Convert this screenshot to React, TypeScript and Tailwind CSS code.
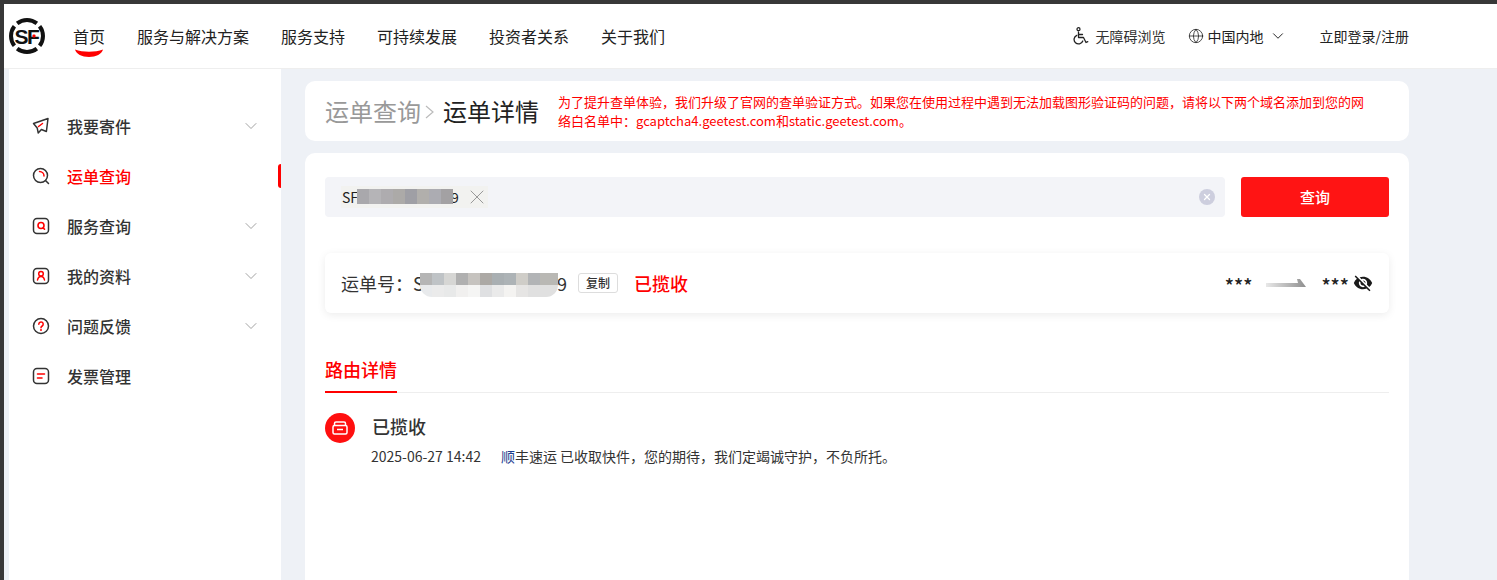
import React from 'react'
import { ChevronDown, Globe, X } from 'lucide-react'
import { MdVisibilityOff } from 'react-icons/md'

const font = { fontFamily: '"Noto Sans CJK SC", "Noto Sans", sans-serif' }

const navItems = ['首页', '服务与解决方案', '服务支持', '可持续发展', '投资者关系', '关于我们']

const SfLogo = () => (
  <svg width="36" height="36" viewBox="0 0 36 36" className="shrink-0">
    <g fill="none" stroke="#111" strokeWidth="4">
      <path d="M8.150 5.400A16 16 0 0 1 27.850 5.400" />
      <path d="M30.600 8.150A16 16 0 0 1 30.600 27.850" />
      <path d="M27.850 30.600A16 16 0 0 1 8.150 30.600" />
      <path d="M5.400 27.850A16 16 0 0 1 5.400 8.150" />
    </g>
    <text x="17.500" y="25.500" textAnchor="middle" fontSize="21" fontWeight="700" fill="#111" letterSpacing="-1.500" fontFamily="Liberation Sans, sans-serif">
      SF
    </text>
    <rect x="23.500" y="16.500" width="3" height="3" rx="1" fill="#ff0000" />
  </svg>
)

const SendIcon = () => (
  <svg width="18" height="18" viewBox="0 0 18 18" fill="none">
    <path d="M1.500 6.500 16 1.500l-1.600 13-5-2-3.200 3.400-1-5z" stroke="#333" strokeWidth="1.500" strokeLinejoin="round" />
    <path d="M6.500 9.500 10.500 6.500" stroke="#ff0000" strokeWidth="1.500" strokeLinecap="round" />
  </svg>
)

const TrackIcon = () => (
  <svg width="18" height="18" viewBox="0 0 18 18" fill="none">
    <circle cx="8.500" cy="8.500" r="7" stroke="#333" strokeWidth="1.500" />
    <path d="M13.500 13.500 16.500 16.500" stroke="#333" strokeWidth="1.500" strokeLinecap="round" />
    <path d="M7.500 4.500a4.500 4.500 0 0 1 4.500 4.500" stroke="#ff0000" strokeWidth="1.500" strokeLinecap="round" />
  </svg>
)

const ServiceIcon = () => (
  <svg width="18" height="18" viewBox="0 0 18 18" fill="none">
    <rect x="1.500" y="1.500" width="15" height="15" rx="3.500" stroke="#333" strokeWidth="1.500" />
    <circle cx="9" cy="8.500" r="3" stroke="#ff0000" strokeWidth="1.600" />
    <path d="M11 11l1.500 1.200" stroke="#ff0000" strokeWidth="1.600" strokeLinecap="round" />
  </svg>
)

const ProfileIcon = () => (
  <svg width="18" height="18" viewBox="0 0 18 18" fill="none">
    <rect x="1.500" y="1.500" width="15" height="15" rx="3.500" stroke="#333" strokeWidth="1.500" />
    <circle cx="9" cy="6.800" r="2.300" stroke="#ff0000" strokeWidth="1.500" />
    <path d="M5.500 13c.4-2.400 1.600-3.600 3.500-3.600s3.100 1.200 3.500 3.600" stroke="#ff0000" strokeWidth="1.500" strokeLinecap="round" />
  </svg>
)

const HelpIcon = () => (
  <svg width="18" height="18" viewBox="0 0 18 18" fill="none">
    <circle cx="9" cy="9" r="7.500" stroke="#333" strokeWidth="1.500" />
    <path d="M6.800 7.200a2.200 2.200 0 1 1 3.400 1.800c-.8.500-1.200 1-1.200 1.800" stroke="#ff0000" strokeWidth="1.500" strokeLinecap="round" />
    <circle cx="9" cy="13" r="1" fill="#ff0000" />
  </svg>
)

const InvoiceIcon = () => (
  <svg width="18" height="18" viewBox="0 0 18 18" fill="none">
    <rect x="1.500" y="1.500" width="15" height="15" rx="3.500" stroke="#333" strokeWidth="1.500" />
    <path d="M5.500 7h7M5.500 11h4.500" stroke="#ff0000" strokeWidth="1.600" strokeLinecap="round" />
  </svg>
)

const WheelchairIcon = () => (
  <svg width="17" height="18" viewBox="0 0 17 18" fill="none" stroke="#222222" strokeWidth="1.300" strokeLinecap="round" strokeLinejoin="round">
    <circle cx="6.500" cy="2.200" r="1.500" />
    <path d="M6.500 5v5.500h5l2.500 5 1.800-.8" />
    <path d="M6.500 7.500h4" />
    <path d="M4.800 8.300a4.500 4.500 0 1 0 6 5.700" />
  </svg>
)

const menu = [
  { label: '我要寄件', icon: <SendIcon />, arrow: true },
  { label: '运单查询', icon: <TrackIcon />, active: true },
  { label: '服务查询', icon: <ServiceIcon />, arrow: true },
  { label: '我的资料', icon: <ProfileIcon />, arrow: true },
  { label: '问题反馈', icon: <HelpIcon />, arrow: true },
  { label: '发票管理', icon: <InvoiceIcon /> },
]

const inputMosaic = ['#a9a8ac', '#b5b4b7', '#aeacaf', '#acaaa8', '#9f9fa5', '#b1afac', '#acacb2', '#a3a1a3']
const mosaicTop = ['#b5b5b5', '#bfc3c6', '#d6d6d4', '#b0b0b0', '#c6c3bf', '#aca9a5', '#a9afb2', '#adb3b6', '#cfcdc8', '#b2b4b6', '#b9b8b4', '#b9b8b4']
const mosaicBottom = ['#e8eaec', '#ebebeb', '#e8e9e9', '#f1f0ef', '#f5f5f4', '#dfe0e2', '#eaeaea', '#f4f3f1', '#e6e5e4', '#e0e0e0', '#e0e0e0', '#e0e0e0']

const Sidebar = () => (
  <aside className="w-[272px] h-full bg-white pt-[32px] shrink-0">
    {menu.map((item) => (
      <div key={item.label} className="relative flex items-center h-[50px] pl-[23px] pr-[20px]">
        <span className="w-[35px] flex">{item.icon}</span>
        <span className={`text-[16px] font-medium ${item.active ? 'text-[#ff0000]' : 'text-[#333333]'}`}>{item.label}</span>
        {item.arrow && <ChevronDown size={20} strokeWidth={1.100} className="ml-auto text-[#999999]" />}
        {item.active && <span className="absolute right-0 top-[13px] w-[3px] h-[24px] rounded-l-sm bg-[#ff0000]" />}
      </div>
    ))}
  </aside>
)

const ArrowBar = () => (
  <svg width="40" height="9" viewBox="0 0 40 9">
    <defs>
      <linearGradient id="routeArrow" x1="0" x2="1" y1="0" y2="0">
        <stop offset="0" stopColor="#e8e8e8" />
        <stop offset="1" stopColor="#8f8f8f" />
      </linearGradient>
    </defs>
    <path d="M0 4h32L31 0h3l6 8H0z" fill="url(#routeArrow)" />
  </svg>
)

export default function App() {
  return (
    <div className="w-[1497px] h-[580px] overflow-hidden flex flex-col bg-[#eef1f6] text-[#333333]" style={font}>
      <div className="h-[4px] bg-[#383838] shrink-0" />
      <div className="flex flex-1 min-h-0">
        <div className="w-[4px] bg-[#383838] shrink-0" />
        <div className="flex-1 min-w-0 flex flex-col">
          <header className="h-[65px] shrink-0 bg-white border-b border-[#eeeeee] flex items-center pl-[5px] pr-[88px]">
            <SfLogo />
            <nav className="flex gap-[32px] ml-[28px] text-[16px] text-[#222222]">
              {navItems.map((item, i) => (
                <span key={item} className="relative">
                  {item}
                  {i === 0 && (
                    <svg width="30" height="9" viewBox="0 0 30 9" className="absolute left-[1px] top-[25px]">
                      <path d="M1 .5c8 3 20 3 28 0-1 4.500-7 7.500-14 7.500S2 5 1 .5z" fill="#ff0000" />
                    </svg>
                  )}
                </span>
              ))}
            </nav>
            <div className="ml-auto flex items-center text-[14px] text-[#222222]">
              <WheelchairIcon />
              <span className="ml-[7px] text-[#333333]">无障碍浏览</span>
              <Globe size={16} strokeWidth={1.200} className="ml-[22px]" />
              <span className="ml-[4px]">中国内地</span>
              <ChevronDown size={18} strokeWidth={1.300} className="ml-[5px]" />
              <span className="ml-[33px]">立即登录/注册</span>
            </div>
          </header>
          <div className="flex-1 min-h-0 flex pl-[5px]">
            <Sidebar />
            <main className="w-[1104px] ml-[24px] pt-[12px] flex flex-col gap-[12px]">
              <section className="h-[60px] bg-white rounded-[10px] flex items-center px-[20px] shrink-0">
                <span className="text-[24px] text-[#999999] leading-none">运单查询</span>
                <svg width="9" height="14" viewBox="0 0 9 14" fill="none" stroke="#bbbbbb" strokeWidth="1.200" className="ml-[4px] mt-[1px]">
                  <path d="M1 1l7 6-7 6" />
                </svg>
                <span className="text-[24px] text-[#222222] leading-none ml-[9px]">运单详情</span>
                <p className="ml-[19px] w-[810px] text-[13px] leading-[19px] text-[#ff0000]">
                  为了提升查单体验，我们升级了官网的查单验证方式。如果您在使用过程中遇到无法加载图形验证码的问题，请将以下两个域名添加到您的网络白名单中：gcaptcha4.geetest.com和static.geetest.com。
                </p>
              </section>
              <section className="flex-1 bg-white rounded-t-[10px] px-[20px] pt-[24px]">
                <div className="flex gap-[16px]">
                  <div className="flex-1 h-[40px] rounded-[4px] bg-[#f3f4f8] flex items-center pl-[16px] pr-[10px]">
                    <span className="relative flex items-center h-[22px] w-[147px] bg-[#f2f2f0] text-[14px] text-[#222222]">
                      <span className="pl-[1px]">SF</span>
                      <span className="ml-auto -mr-[1px]">
                        <X size={24} strokeWidth={1} className="text-[#999999]" />
                      </span>
                      <span className="absolute left-[110px] text-[14px]">9</span>
                      <span className="absolute left-[16px] top-[3px] flex h-[15px]">
                        {inputMosaic.map((c, i) => (
                          <span key={i} className="w-[12px] h-full" style={{ backgroundColor: c }} />
                        ))}
                      </span>
                    </span>
                    <span className="ml-auto w-[16px] h-[16px] rounded-full bg-[#cdcede] flex items-center justify-center">
                      <X size={10} strokeWidth={3} className="text-white" />
                    </span>
                  </div>
                  <button className="w-[148px] h-[40px] rounded-[3px] bg-[#ff1414] text-white text-[15px] font-medium">查询</button>
                </div>
                <div className="mt-[36px] h-[60px] rounded-[6px] bg-white shadow-[0_2px_8px_rgba(0,0,0,0.08)] flex items-center pl-[16px] pr-[16px]">
                  <span className="text-[18px] text-[#333333]">运单号：</span>
                  <span className="relative w-[165px] text-[18px] text-[#333333]">
                    S
                    <span className="absolute left-[144px]">9</span>
                    <span className="absolute left-[7px] top-[3px] flex flex-col w-[138px] overflow-hidden rounded-b-[12px]">
                      <span className="flex h-[12px]">
                        {mosaicTop.map((c, i) => (
                          <span key={i} className="w-[12px] shrink-0 h-full" style={{ backgroundColor: c }} />
                        ))}
                      </span>
                      <span className="flex h-[12px]">
                        {mosaicBottom.map((c, i) => (
                          <span key={i} className="w-[12px] shrink-0 h-full" style={{ backgroundColor: c }} />
                        ))}
                      </span>
                    </span>
                  </span>
                  <span className="w-[40px] h-[20px] rounded-[3px] border border-[#dddddd] flex items-center justify-center text-[12px] font-medium">复制</span>
                  <span className="ml-[16px] text-[18px] font-medium text-[#ff0000]">已揽收</span>
                  <div className="ml-auto flex items-center">
                    <span className="text-[19px] leading-none font-medium text-[#222222] mt-[2px]">***</span>
                    <span className="ml-[14px] flex"><ArrowBar /></span>
                    <span className="ml-[15px] text-[19px] leading-none font-medium text-[#222222] mt-[2px]">***</span>
                    <MdVisibilityOff size={20} className="ml-[4px] text-[#1a1a1a]" />
                  </div>
                </div>
                <div className="mt-[36px] border-b border-[#eeeeee] h-[44px]">
                  <span className="inline-block h-[44px] leading-[40px] border-b-2 border-[#ff0000] text-[18px] font-medium text-[#ff0000]">路由详情</span>
                </div>
                <div className="mt-[20px] flex gap-[17px]">
                  <span className="w-[30px] h-[30px] rounded-full bg-[#ff0f0f] flex items-center justify-center shrink-0">
                    <svg width="16" height="14" viewBox="0 0 16 14" fill="none" stroke="#ffffff" strokeWidth="1.500">
                      <path d="M2.500 4.500V2.500A1.500 1.500 0 0 1 4 1h8a1.500 1.500 0 0 1 1.500 1.500v2" />
                      <rect x="1" y="4.500" width="14" height="8.500" rx="1.500" />
                      <path d="M5 8.500h6" />
                    </svg>
                  </span>
                  <div className="-mt-[1px]">
                    <p className="text-[18px] leading-[28px] font-medium text-[#333333]">已揽收</p>
                    <p className="mt-[2px] text-[14px] leading-[28px] text-[#333333] -ml-[1px]">
                      2025-06-27 14:42
                      <span className="ml-[20px]">
                        <span className="text-[#1c3d8f]">顺</span>丰速运 已收取快件，您的期待，我们定竭诚守护，不负所托。
                      </span>
                    </p>
                  </div>
                </div>
              </section>
            </main>
          </div>
        </div>
      </div>
    </div>
  )
}
